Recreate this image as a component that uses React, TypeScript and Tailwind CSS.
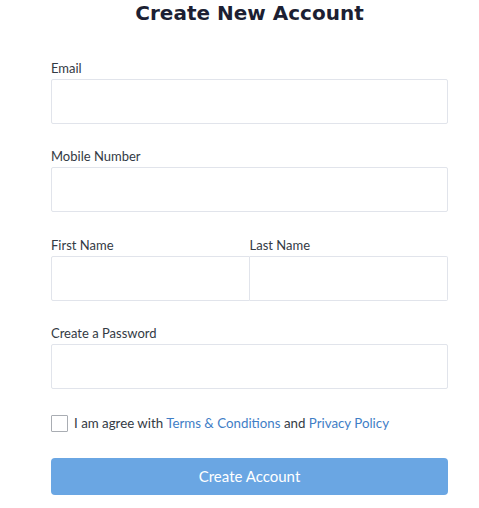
import React from 'react';

const Field = ({ label }: { label: string }) => (
  <div className="flex flex-col">
    <label className="h-5 leading-5 text-[13px] text-[#333a44] mb-px">{label}</label>
    <input className="h-[45px] w-full border border-[#e1e4eb] rounded-[2px] bg-white px-3 outline-none" />
  </div>
);

const App = () => {
  return (
    <div className="min-h-screen bg-white" style={{ fontFamily: 'Lato, "Open Sans", sans-serif' }}>
      <div className="ml-[51px] w-[397px] flex flex-col">
        <h1
          className="text-center text-[20px] leading-[26px] font-bold text-[#1c1f33] mt-0 mb-[32px]"
          style={{ fontFamily: '"DejaVu Sans", sans-serif' }}
        >
          Create New Account
        </h1>
        <div className="flex flex-col gap-[22px]">
          <Field label="Email" />
          <Field label="Mobile Number" />
          <div className="grid grid-cols-2 mt-px">
            <div className="flex flex-col">
              <label className="h-5 leading-5 text-[13px] text-[#333a44] mb-px">First Name</label>
              <input className="h-[45px] w-full border border-[#e1e4eb] rounded-l-[2px] bg-white outline-none" />
            </div>
            <div className="flex flex-col">
              <label className="h-5 leading-5 text-[13px] text-[#333a44] mb-px">Last Name</label>
              <input className="h-[45px] w-full border border-l-0 border-[#e1e4eb] rounded-r-[2px] bg-white outline-none" />
            </div>
          </div>
          <Field label="Create a Password" />
        </div>
        <div className="flex items-center mt-[26px] h-[17px]">
          <span className="w-[17px] h-[17px] border border-[#a9adb3] rounded-[1px] bg-white shrink-0" />
          <span className="ml-[6px] text-[13.3px] leading-[17px] text-[#333a44]">
            I am agree with <span className="text-[#3f7ec6]">Terms &amp; Conditions</span> and{' '}
            <span className="text-[#3f7ec6]">Privacy Policy</span>
          </span>
        </div>
        <button className="mt-[26px] h-[37px] w-full rounded-[4px] bg-[#6aa6e3] text-white text-[15px]">
          Create Account
        </button>
      </div>
    </div>
  );
};

export default App;
